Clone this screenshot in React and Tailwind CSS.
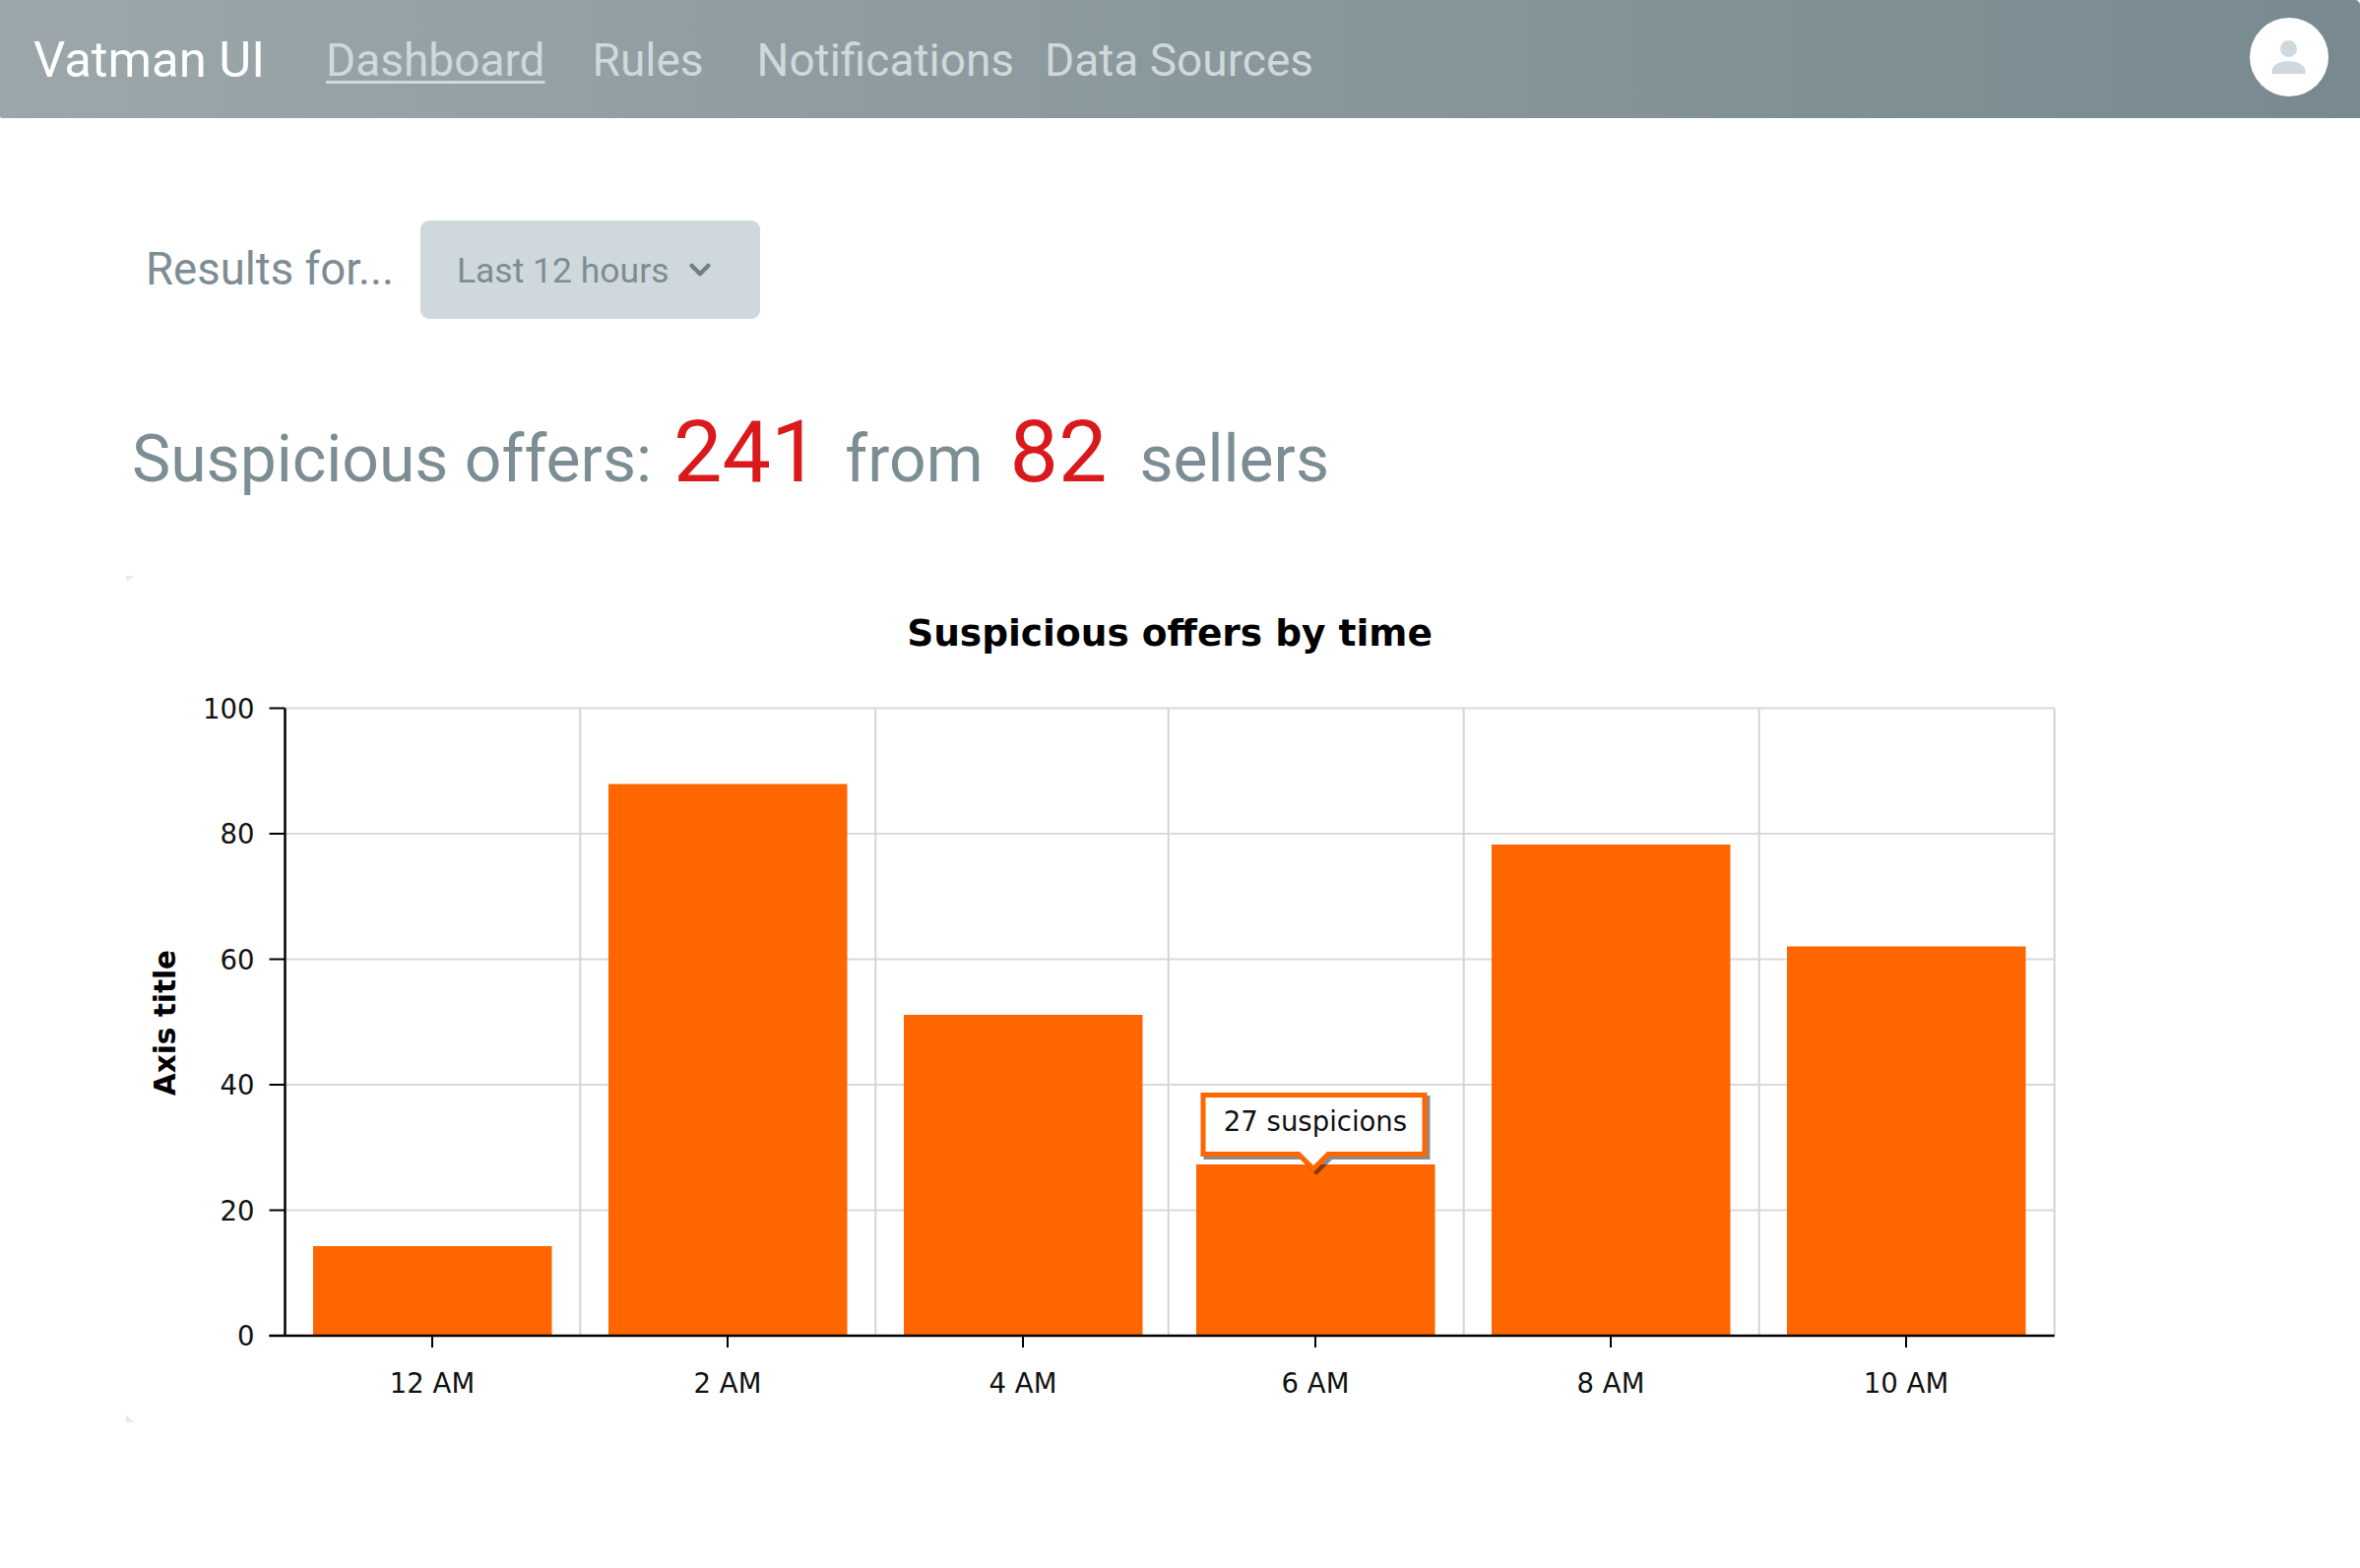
import { ChevronDown } from "lucide-react";

// x / top are read off the plot, the bars do not sit on an even grid
const bars = [
  { label: "12 AM", x: 190, top: 681, tick: 311 },
  { label: "2 AM", x: 490, top: 211.5, tick: 611 },
  { label: "4 AM", x: 790, top: 446, tick: 911 },
  { label: "6 AM", x: 1087, top: 598, tick: 1208 },
  { label: "8 AM", x: 1387, top: 273, tick: 1508 },
  { label: "10 AM", x: 1687, top: 376.5, tick: 1808 },
];

const plot = { left: 161.5, right: 1958.7, top: 134.5, bottom: 772 };
const gridX = [461.3, 761.3, 1058.7, 1358.7, 1658.7, 1958.7];
const tooltipPath = "M1094 527.5h225v60h-98l-15 15-15-15h-97z";

const navLinks = [
  { label: "Dashboard", className: "ml-[62px] underline underline-offset-[5px] decoration-[3px]" },
  { label: "Rules", className: "ml-[48px]" },
  { label: "Notifications", className: "ml-[54px]" },
  { label: "Data Sources", className: "ml-[31px]" },
];

function Header() {
  return (
    <header className="flex h-[120px] items-center rounded-tr-[5px] rounded-bl-[2px] bg-gradient-to-r from-[#9ba7aa] to-[#788a90] pl-[34px] pr-[32px]">
      <span className="pt-[3px] text-[50.8px] text-white">Vatman UI</span>
      {navLinks.map((link) => (
        <a key={link.label} className={`pt-[2px] text-[46px] text-[#cfd8dc] ${link.className}`}>
          {link.label}
        </a>
      ))}
      <div className="mb-[5px] ml-auto h-[80px] w-[80px] rounded-full bg-white">
        <svg width="80" height="80" viewBox="0 0 80 80" className="block fill-[#cfd8dc]">
          <circle cx="39.5" cy="31.5" r="8.5" />
          <path d="M22.5 57v-3c0-6 9-10 17-10s17 4 17 10v3z" />
        </svg>
      </div>
    </header>
  );
}

function Chart() {
  const y = (value) => plot.bottom - ((plot.bottom - plot.top) * value) / 100;

  return (
    <svg width="2008" height="860" viewBox="0 0 2008 860" className="block" style={{ fontFamily: '"DejaVu Sans", sans-serif' }}>
      <path d="M0 0h8l-8 6z" fill="#e8ecef" />
      <path d="M0 860v-8l8 8z" fill="#e8ecef" />
      <text x="1060" y="71" textAnchor="middle" fontSize="37.5" fontWeight="700" fill="#000">
        Suspicious offers by time
      </text>

      {[0, 20, 40, 60, 80, 100].map((tick) => (
        <g key={tick}>
          {tick > 0 && <line x1={plot.left} x2={plot.right} y1={y(tick)} y2={y(tick)} stroke="#d9d9d9" strokeWidth="2" />}
          <line x1={plot.left - 16} x2={plot.left} y1={y(tick)} y2={y(tick)} stroke="#000" strokeWidth="2" />
          <text x={plot.left - 31} y={y(tick) + 10} textAnchor="end" fontSize="27.5" fill="#111">
            {tick}
          </text>
        </g>
      ))}

      {gridX.map((x) => (
        <line key={x} x1={x} x2={x} y1={plot.top} y2={plot.bottom} stroke="#d4d4d4" strokeWidth="2" />
      ))}

      {bars.map((bar) => (
        <g key={bar.label}>
          <rect x={bar.x} y={bar.top} width="242.5" height={plot.bottom - bar.top} fill="#ff6600" />
          <line x1={bar.tick} x2={bar.tick} y1={plot.bottom} y2={plot.bottom + 12} stroke="#000" strokeWidth="2" />
          <text x={bar.tick} y={plot.bottom + 58} textAnchor="middle" fontSize="27.5" fill="#111">
            {bar.label}
          </text>
        </g>
      ))}

      <line x1={plot.left} x2={plot.left} y1={plot.top} y2={plot.bottom} stroke="#000" strokeWidth="2.5" />
      <line x1={plot.left - 16} x2={plot.right} y1={plot.bottom} y2={plot.bottom} stroke="#000" strokeWidth="2.5" />

      <text transform="translate(50 454) rotate(-90)" textAnchor="middle" fontSize="29.5" fontWeight="700" fill="#000">
        Axis title
      </text>

      <g opacity="0.45" transform="translate(3 3)">
        <path d={tooltipPath} fill="#000" stroke="#000" strokeWidth="5" />
      </g>
      <path d={tooltipPath} fill="#fff" stroke="#ff6600" strokeWidth="5" />
      <text x="1208" y="564" textAnchor="middle" fontSize="27.5" fill="#111">
        27 suspicions
      </text>
    </svg>
  );
}

export default function App() {
  return (
    <div className="min-h-[1593px] bg-white font-['Roboto',sans-serif]">
      <Header />
      <main className="pl-[128px]">
        <div className="flex items-center pl-[20px] pt-[104px]">
          <span className="text-[45.5px] text-[#7c8d94]">Results for...</span>
          <button className="ml-[27px] flex h-[100px] w-[345px] items-center rounded-[9px] bg-[#cfd8dc] pl-[37px] text-[35.5px] text-[#7c8d94]">
            <span className="pt-[3px]">Last 12 hours</span>
            <ChevronDown size={34} strokeWidth={3} className="ml-[14px] text-[#6f7f85]" />
          </button>
        </div>
        <h1 className="mt-[69px] flex items-baseline pl-[6px] text-[66px] font-normal text-[#7c8d94]">
          Suspicious offers:
          <span className="ml-[22px] text-[88px] text-[#d9191c]">241</span>
          <span className="ml-[26px]">from</span>
          <span className="ml-[27px] text-[88px] text-[#d9191c]">82</span>
          <span className="ml-[33px]">sellers</span>
        </h1>
        <div className="mt-[60px]">
          <Chart />
        </div>
      </main>
    </div>
  );
}
